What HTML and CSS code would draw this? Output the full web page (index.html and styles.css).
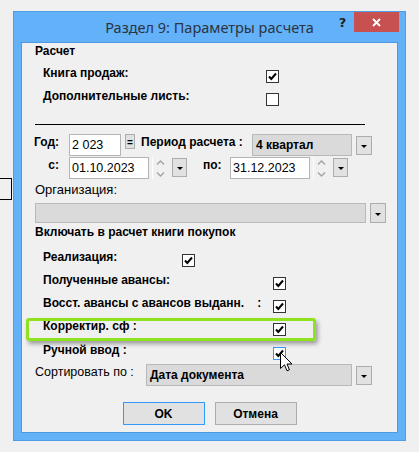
FILE: index.html
```html
<!DOCTYPE html>
<html lang="ru">
<head>
    <meta charset="UTF-8">
    <title>Раздел 9: Параметры расчета</title>
    <link rel="stylesheet" href="styles.css">
</head>
<body>

    <!-- Window behind the dialog -->
    <div class="behind"></div>

    <div class="window">
        <div class="titlebar">
            <span class="title">Раздел 9: Параметры расчета</span>
            <div class="caption-buttons">
                <span class="help">?</span>
                <span class="close">
                    <svg width="9" height="9" viewBox="0 0 9 9"><path d="M1 1L8 8M8 1L1 8" stroke="#fff" stroke-width="1.8"/></svg>
                </span>
            </div>
        </div>

        <div class="client">
            <div class="section-title">Расчет</div>

            <div class="check-row r-sales">
                <span class="lbl w-wide">Книга продаж:</span>
                <span class="cb"><svg width="11" height="11" viewBox="0 0 11 11"><path d="M2 5.5L4.3 8L9 2.5" fill="none" stroke="#000" stroke-width="2"/></svg></span>
            </div>
            <div class="check-row r-extra">
                <span class="lbl w-wide">Дополнительные листь:</span>
                <span class="cb"></span>
            </div>

            <div class="divider"></div>

            <!-- Period -->
            <div class="field-row r-year">
                <span class="lbl lbl-right w-short">Год:</span>
                <span class="input w-yearbox">2 023</span>
                <span class="eq-btn">=</span>
                <span class="lbl w-period">Период расчета :</span>
                <span class="combo w-period-combo">4 квартал</span>
                <span class="drop"></span>
            </div>
            <div class="field-row r-date">
                <span class="lbl lbl-right w-short">с:</span>
                <span class="input w-date">01.10.2023</span>
                <span class="spin">
                    <svg width="23" height="22" viewBox="0 0 23 22"><path d="M3.5 0V22" stroke="#fff"/><path d="M8 7.5L11.5 4L15 7.5M8 15.5L11.5 19L15 15.5" fill="none" stroke="#a6a6a6" stroke-width="1.5"/></svg>
                </span>
                <span class="drop small"></span>
                <span class="lbl lbl-to">по:</span>
                <span class="input w-date">31.12.2023</span>
                <span class="spin">
                    <svg width="23" height="22" viewBox="0 0 23 22"><path d="M3.5 0V22" stroke="#fff"/><path d="M8 7.5L11.5 4L15 7.5M8 15.5L11.5 19L15 15.5" fill="none" stroke="#a6a6a6" stroke-width="1.5"/></svg>
                </span>
                <span class="drop small"></span>
            </div>

            <!-- Organization -->
            <div class="plain-label">Организация:</div>
            <div class="field-row r-org">
                <span class="combo w-org"></span>
                <span class="drop tall"></span>
            </div>

            <div class="section-title r-include">Включать в расчет книги покупок</div>

            <div class="check-row r-real">
                <span class="lbl w-real">Реализация:</span>
                <span class="cb"><svg width="11" height="11" viewBox="0 0 11 11"><path d="M2 5.5L4.3 8L9 2.5" fill="none" stroke="#000" stroke-width="2"/></svg></span>
            </div>
            <div class="check-row r-next">
                <span class="lbl w-long">Полученные авансы:</span>
                <span class="cb"><svg width="11" height="11" viewBox="0 0 11 11"><path d="M2 5.5L4.3 8L9 2.5" fill="none" stroke="#000" stroke-width="2"/></svg></span>
            </div>
            <div class="check-row r-next">
                <span class="lbl w-long">Восст. авансы с авансов выданн.    :</span>
                <span class="cb"><svg width="11" height="11" viewBox="0 0 11 11"><path d="M2 5.5L4.3 8L9 2.5" fill="none" stroke="#000" stroke-width="2"/></svg></span>
            </div>
            <div class="check-row r-next">
                <span class="lbl w-long">Корректир. сф :</span>
                <span class="cb"><svg width="11" height="11" viewBox="0 0 11 11"><path d="M2 5.5L4.3 8L9 2.5" fill="none" stroke="#000" stroke-width="2"/></svg></span>
            </div>
            <div class="check-row r-manual">
                <span class="lbl w-long">Ручной ввод :</span>
                <span class="cb hover"><svg width="11" height="11" viewBox="0 0 11 11"><path d="M2 5.5L4.3 8L9 2.5" fill="none" stroke="#000" stroke-width="2"/></svg></span>
            </div>

            <div class="field-row r-sort">
                <span class="lbl w-sort">Сортировать по :</span>
                <span class="combo w-sort-combo">Дата документа</span>
                <span class="drop"></span>
            </div>

            <div class="buttons">
                <button class="btn default">OK</button>
                <button class="btn">Отмена</button>
            </div>

            <!-- Annotation and mouse pointer -->
            <div class="highlight"></div>
            <svg class="pointer" width="13" height="20" viewBox="0 0 13 20">
                <path d="M0.5 0.5V16.5L4.5 12.8L7 18.8L9.4 17.8L7 12H12Z" fill="#fff" stroke="#000"/>
            </svg>
        </div>
    </div>

</body>
</html>
```

FILE: styles.css
```css
* {
    box-sizing: border-box;
}

body {
    margin: 0;
    width: 419px;
    height: 452px;
    overflow: hidden;
    position: relative;
    background-color: #f0f0f0;
    font-family: "Liberation Sans", Arial, sans-serif;
    font-size: 12px;
    line-height: 13px;
    color: #000;
}

.behind {
    position: absolute;
    left: 0;
    top: 178px;
    width: 12px;
    height: 22px;
    border: 1px solid #000;
    border-left: none;
}

/* Window frame */
.window {
    margin: 11px 0 0 13px;
    width: 393px;
    height: 430px;
    background-color: #63b1f8;
    border: 1px solid #4f9be6;
    padding: 0 7px 7px 7px;
    display: flex;
    flex-direction: column;
}

.titlebar {
    height: 30px;
    position: relative;
    display: flex;
    align-items: center;
    justify-content: center;
}

.title {
    font-family: "Noto Sans", "Open Sans", sans-serif;
    font-size: 14.5px;
    color: #2b3440;
    padding-top: 1px;
}

.caption-buttons {
    position: absolute;
    top: 0;
    right: -1px;
    display: flex;
}

.help {
    width: 23px;
    height: 20px;
    display: flex;
    align-items: center;
    justify-content: center;
    font-family: "DejaVu Sans", sans-serif;
    font-weight: bold;
    font-size: 13px;
    color: #222;
}

.close {
    width: 45px;
    height: 20px;
    background-color: #c75050;
    display: flex;
    align-items: center;
    justify-content: center;
}

.client {
    flex: 1;
    position: relative;
    background-color: #f0f0f0;
    border: 1px solid #4f97de;
}

/* Labels */
.section-title {
    margin: 2px 0 0 13px;
    font-weight: bold;
}

.r-include {
    margin-top: 3px;
}

.plain-label {
    margin: 4px 0 0 13px;
    font-size: 13px;
}

.lbl {
    flex: none;
    font-weight: bold;
    white-space: pre;
}

.lbl-right {
    text-align: right;
}

/* Checkbox rows */
.check-row {
    display: flex;
    align-items: flex-start;
    height: 13px;
    padding-left: 21px;
}

.check-row .lbl {
    margin-top: -3px;
}

.r-sales { margin-top: 12px; }
.r-extra { margin-top: 10px; }
.r-real { margin-top: 15px; }
.r-next { margin-top: 10px; }
.r-manual { margin-top: 11px; }

.w-wide { width: 223px; }
.w-real { width: 139px; }
.w-long { width: 230px; }

.cb {
    flex: none;
    width: 13px;
    height: 13px;
    background-color: #fff;
    border: 1px solid #333;
    display: flex;
    align-items: center;
    justify-content: center;
}

.cb.hover {
    border-color: #3399ff;
}

.divider {
    margin: 18px 0 0 13px;
    width: 330px;
    height: 1px;
    background-color: #000;
}

/* Field rows */
.field-row {
    display: flex;
    align-items: flex-start;
    height: 22px;
}

.field-row .lbl {
    margin-top: 2px;
}

.r-year { margin-top: 9px; }
.r-date { margin-top: 1px; }
.r-org {
    margin-top: 7px;
    padding-left: 13px;
    height: 20px;
}
.r-sort {
    margin-top: 4px;
    padding-left: 13px;
}

.w-short { width: 37px; }
.w-period { width: 111px; margin-left: 6px; }
.lbl-to { width: 27px; margin-left: 16px; }
.w-sort { width: 111px; font-weight: normal; font-size: 12.5px; }

.input {
    flex: none;
    height: 22px;
    background-color: #fff;
    border: 1px solid #b4b4b4;
    padding: 1px 0 0 2px;
    font-size: 12.5px;
    line-height: 18px;
}

.w-yearbox { width: 52px; margin-left: 10px; }
.w-date { width: 80px; margin-left: 10px; }
.lbl-to + .w-date { margin-left: 0; }

.eq-btn {
    flex: none;
    width: 10px;
    height: 15px;
    margin-left: 4px;
    background-color: #e1e1e1;
    border: 1px solid #adadad;
    font-weight: bold;
    font-size: 10px;
    line-height: 16px;
    text-align: center;
    overflow: hidden;
}

.spin {
    flex: none;
    width: 23px;
    height: 22px;
}

.combo {
    flex: none;
    height: 22px;
    background-color: #dadada;
    border: 1px solid #b9b9b9;
    padding: 0 0 0 3px;
    display: flex;
    align-items: center;
    font-weight: bold;
    font-size: 12px;
}

.w-period-combo { width: 100px; }
.w-org { width: 331px; height: 20px; }
.w-sort-combo { width: 206px; }

.drop {
    flex: none;
    width: 16px;
    height: 19px;
    margin: 2px 0 0 4px;
    background-color: #e1e1e1;
    border: 1px solid #adadad;
    display: flex;
    align-items: center;
    justify-content: center;
    padding-top: 2px;
}

.drop::after {
    content: "";
    border-left: 3px solid transparent;
    border-right: 3px solid transparent;
    border-top: 3px solid #000;
}

.drop.small {
    width: 15px;
    margin: 1px 0 0 0;
}

.drop.tall {
    height: 20px;
    margin-top: 0;
}

/* Buttons */
.buttons {
    margin-top: 16px;
    display: flex;
    justify-content: center;
    gap: 10px;
}

.btn {
    width: 82px;
    height: 23px;
    background-color: #e1e1e1;
    border: 1px solid #adadad;
    font-family: "Liberation Sans", Arial, sans-serif;
    font-weight: bold;
    font-size: 12px;
    color: #000;
    padding: 0;
}

.btn.default {
    border-color: #3399ff;
}

/* Overlays */
.highlight {
    position: absolute;
    left: 4px;
    top: 275px;
    width: 290px;
    height: 23px;
    border: 3px solid #8ee21e;
    border-radius: 3px;
    box-shadow: 2px 3px 4px rgba(0, 0, 0, 0.35);
}

.pointer {
    position: absolute;
    left: 258px;
    top: 309px;
}
```
